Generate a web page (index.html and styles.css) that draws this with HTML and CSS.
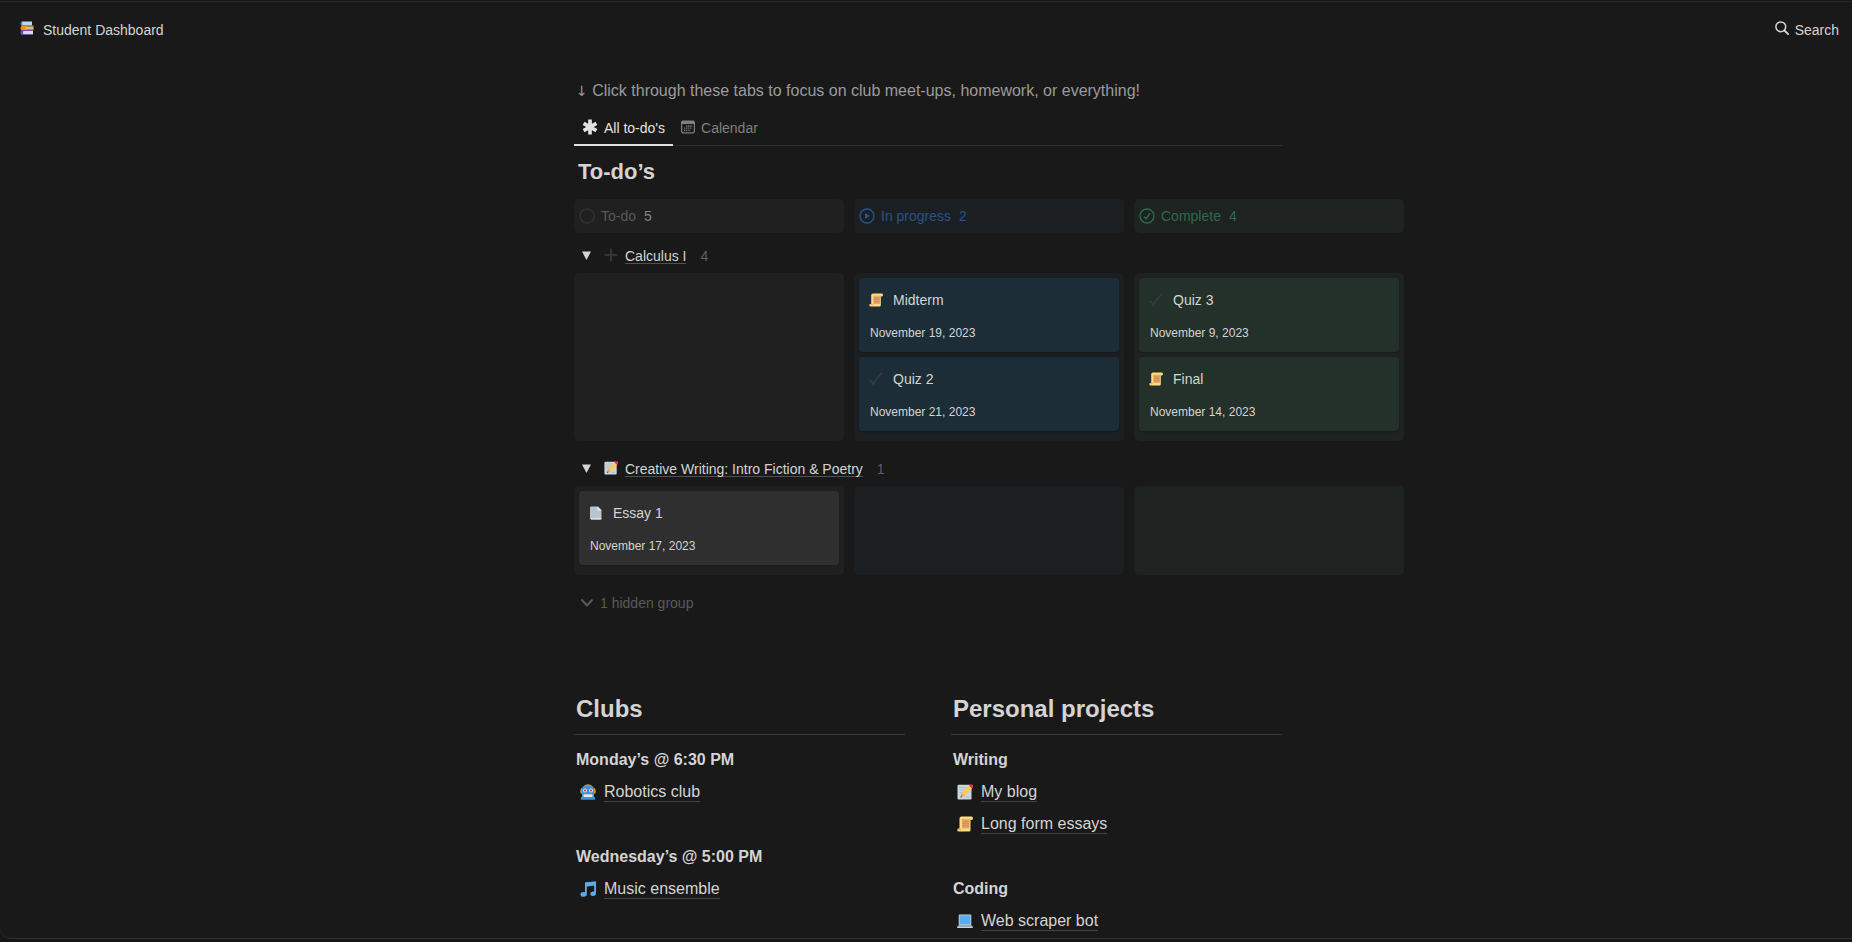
FILE: index.html
```html
<!DOCTYPE html>
<html lang="en">
<head>
<meta charset="utf-8">
<title>Student Dashboard</title>
<link rel="stylesheet" href="styles.css">
</head>
<body>
<svg class="sprites" aria-hidden="true">
  <symbol id="books" viewBox="0 0 14 14">
    <path fill="#3b88c3" d="M2 0h10v1H3v3h9v1H2Q.5 4.500.5 2.500T2 0z"/><path fill="#bfd6e4" d="M2.500 1H12v3H2.500q-1-1.500 0-3z"/>
    <path fill="#f4900c" d="M2 4.500h11.500v1H6v3h7.500v1H2Q.5 9 .5 7T2 4.500z"/><path fill="#d9b98f" d="M5.500 5.500h8v3h-8z"/>
    <path fill="#744eaa" d="M2 9h11v1H4v3h9v1H2Q.5 13.500.5 11.500T2 9z"/><path fill="#d5dbe8" d="M3.500 10H13v3H3.500q-1-1.500 0-3z"/>
  </symbol>
  <symbol id="search" viewBox="0 0 14 14"><circle cx="5.800" cy="5.800" r="4.900" fill="none" stroke="currentColor" stroke-width="1.500"/><path d="M9.500 9.500l3.600 3.600" stroke="currentColor" stroke-width="1.900" stroke-linecap="round"/></symbol>
  <symbol id="asterisk" viewBox="0 0 16 16"><path d="M8 .6v14.800M1.600 4.300l12.800 7.400M14.400 4.300L1.600 11.700" stroke="currentColor" stroke-width="3.700" stroke-linecap="butt"/></symbol>
  <symbol id="calendar" viewBox="0 0 14 14"><path fill="currentColor" fill-rule="evenodd" d="M2 .5h10a2 2 0 0 1 2 2v9a2 2 0 0 1-2 2H2a2 2 0 0 1-2-2v-9a2 2 0 0 1 2-2zM1.200 4v7.300q0 1 1 1h9.600q1 0 1-1V4z"/><path d="M5 6h6.500M3 8.200h8.500M3 10.400h6.500" stroke="currentColor" stroke-width="1.300" stroke-dasharray="1.300 .8"/></symbol>
  <symbol id="st-todo" viewBox="0 0 16 16"><circle cx="8" cy="8" r="7" fill="none" stroke="currentColor" stroke-width="1.300" stroke-dasharray="1.600 .6"/></symbol>
  <symbol id="st-play" viewBox="0 0 16 16"><circle cx="8" cy="8" r="7" fill="none" stroke="currentColor" stroke-width="1.400"/><path d="M6 5v6l5-3z" fill="currentColor"/></symbol>
  <symbol id="st-done" viewBox="0 0 16 16"><circle cx="8" cy="8" r="7" fill="none" stroke="currentColor" stroke-width="1.400"/><path d="M5 8.500l2.200 2.300L11 5" fill="none" stroke="currentColor" stroke-width="1.400"/></symbol>
  <symbol id="plus" viewBox="0 0 14 14"><path d="M7 1.500v11M1.500 7h11" stroke="#31373d" stroke-width="2.200" stroke-linecap="round"/></symbol>
  <symbol id="check" viewBox="0 0 14 14"><path d="M1.200 8.600q2 1.500 3.200 3.700Q7.500 5.500 12.600 1.200" fill="none" stroke="#343a42" stroke-width="1.900" stroke-linecap="round"/></symbol>
  <symbol id="scroll" viewBox="0 0 16 16">
    <path fill="#ffd983" d="M4.500.5h10q1.500.3 1.500 1.700T14.500 4h-1v10q0 1.500-1.500 1.500H2Q.3 15.500.3 14T1.500 12.500h1V2.500q0-2 2-2z"/>
    <path fill="#e39f3d" d="M4.500 3.200H14v.7H4.500zM1.500 12.800h3l-1 1.300h-2z"/><path fill="#e3a569" d="M5 4h7.500v8.500H5z"/><path stroke="#c37f48" stroke-width=".7" d="M5.500 5.700h6.500M5.500 7.800h6.500M5.500 10h6.500"/>
  </symbol>
  <symbol id="page" viewBox="0 0 14 14"><path fill="#b8c5cf" d="M2 .5h7L12.500 4v8.500q0 1-1 1H2.500q-1.500 0-1.500-1V1.500q0-1 1-1z"/><path fill="#e1e8ed" d="M8.500.5L12.500 4.500H8.500zM1 12.500l11.500-.5q0 1.500-1 1.500h-9z"/></symbol>
  <symbol id="memo" viewBox="0 0 16 16">
    <rect x=".5" y=".8" width="14" height="14.700" rx="1.200" fill="#ccd6dd"/><path stroke="#a9b8c2" stroke-width=".8" d="M2.500 3.500h8M2.500 6h6M2.500 8.500h4M2.500 11h2M8.500 13h4"/>
    <path fill="#ffcc4d" d="M4.800 9.100l7.200-7.400 3 2.900-7.400 7.400z"/><path fill="#d99e82" d="M3.500 13.400L4.800 9.100l2.800 2.900z"/><path fill="#292f33" d="M3.400 13.600l.6-1.600 1.100 1z"/><path fill="#ea2f49" d="M12 1.700L13.500.4Q15 .1 15.800.9t.3 2.200l-1.100 1.500z"/>
  </symbol>
  <symbol id="robot" viewBox="0 0 16 16">
    <path fill="#e0932a" d="M3 3Q4.500.3 8 .3T13 3zM.3 7q0-3 2-3.500V10Q.3 10 .3 8zM15.700 7q0-3-2-3.500V10q2 0 2-2z"/>
    <path fill="#3b94d9" d="M2 5q0-3.200 6-3.200T14 5v7.500l1.200 1.200v2H.8v-2L2 12.500z"/><circle cx="5" cy="6.500" r="2" fill="#e9dfe8"/><circle cx="11" cy="6.500" r="2" fill="#e9dfe8"/><circle cx="5" cy="6.500" r="1.100" fill="#dd2e44"/><circle cx="11" cy="6.500" r="1.100" fill="#dd2e44"/><rect x="3.400" y="10.300" width="9.200" height="2.600" rx=".6" fill="#e6e7e8"/>
  </symbol>
  <symbol id="music" viewBox="0 0 16 16"><path fill="#5dadec" d="M5 1.300Q10 1.300 15.500.2 16 .2 16 1v11q0 3-3 3-2.700 0-2.700-2.200T13 10.400l1.200.1V4.500L6.800 5.400V13q0 2.800-3.300 2.800Q.5 15.800.5 13.400T3.700 11l1.300.2z"/></symbol>
  <symbol id="laptop" viewBox="0 0 16 16"><rect x="1.700" y="1.500" width="12.600" height="10.500" rx="1" fill="#ccd6dd"/><path fill="#5dadec" d="M2.500 2.300h11v9h-11z"/><path fill="#9aaab4" d="M1.700 11.700h12.600L16 14H0z"/><path fill="#ccd6dd" d="M0 14h16q0 1-1 1H1q-1 0-1-1z"/></symbol>
  <symbol id="chevron" viewBox="0 0 14 14"><path d="M1.500 3.500l5.500 6 5.500-6" fill="none" stroke="currentColor" stroke-width="2"/></symbol>
  <symbol id="triangle" viewBox="0 0 9 9"><path d="M0 .5h9L4.500 9z" fill="currentColor"/></symbol>
</svg>
<div class="window">
  <header class="topbar">
    <a class="crumb" href="#"><svg class="i14"><use href="#books"/></svg>Student Dashboard</a>
    <button class="search" type="button"><svg class="i14"><use href="#search"/></svg>Search</button>
  </header>
  <main class="content">
    <p class="hint"><span class="arrow">↓</span> Click through these tabs to focus on club meet-ups, homework, or everything!</p>
    <nav class="tabs">
      <button class="tab active" type="button"><svg class="i16"><use href="#asterisk"/></svg>All to-do's</button>
      <button class="tab" type="button"><svg class="i14"><use href="#calendar"/></svg>Calendar</button>
    </nav>
    <h2 class="board-title">To-do’s</h2>
    <section class="board">
      <div class="row">
        <div class="col head todo"><svg class="i16"><use href="#st-todo"/></svg>To-do<span class="num">5</span></div>
        <div class="col head doing"><svg class="i16"><use href="#st-play"/></svg>In progress<span class="num">2</span></div>
        <div class="col head done"><svg class="i16"><use href="#st-done"/></svg>Complete<span class="num">4</span></div>
      </div>
      <div class="group">
        <button class="toggle" type="button" aria-label="Toggle Calculus I"><svg class="i9"><use href="#triangle"/></svg></button>
        <svg class="i14"><use href="#plus"/></svg><a href="#">Calculus I</a><span class="count">4</span>
      </div>
      <div class="row">
        <div class="col cell todo"></div>
        <div class="col cell doing">
          <article class="card"><h3><svg class="i14"><use href="#scroll"/></svg>Midterm</h3><time>November 19, 2023</time></article>
          <article class="card"><h3><svg class="i14"><use href="#check"/></svg>Quiz 2</h3><time>November 21, 2023</time></article>
        </div>
        <div class="col cell done">
          <article class="card"><h3><svg class="i14"><use href="#check"/></svg>Quiz 3</h3><time>November 9, 2023</time></article>
          <article class="card"><h3><svg class="i14"><use href="#scroll"/></svg>Final</h3><time>November 14, 2023</time></article>
        </div>
      </div>
      <div class="group later">
        <button class="toggle" type="button" aria-label="Toggle Creative Writing"><svg class="i9"><use href="#triangle"/></svg></button>
        <svg class="i14"><use href="#memo"/></svg><a href="#">Creative Writing: Intro Fiction &amp; Poetry</a><span class="count">1</span>
      </div>
      <div class="row">
        <div class="col cell todo">
          <article class="card"><h3><svg class="i14"><use href="#page"/></svg>Essay 1</h3><time>November 17, 2023</time></article>
        </div>
        <div class="col cell doing"></div>
        <div class="col cell done"></div>
      </div>
      <button class="hidden-group" type="button"><svg class="i14"><use href="#chevron"/></svg>1 hidden group</button>
    </section>
    <div class="columns">
      <section>
        <h2>Clubs</h2>
        <h3>Monday’s @ 6:30 PM</h3>
        <a class="item" href="#"><svg class="i16"><use href="#robot"/></svg><span>Robotics club</span></a>
        <div class="blank"></div>
        <h3>Wednesday’s @ 5:00 PM</h3>
        <a class="item" href="#"><svg class="i16"><use href="#music"/></svg><span>Music ensemble</span></a>
      </section>
      <section>
        <h2>Personal projects</h2>
        <h3>Writing</h3>
        <a class="item" href="#"><svg class="i16"><use href="#memo"/></svg><span>My blog</span></a>
        <a class="item" href="#"><svg class="i16"><use href="#scroll"/></svg><span>Long form essays</span></a>
        <div class="blank"></div>
        <h3>Coding</h3>
        <a class="item" href="#"><svg class="i16"><use href="#laptop"/></svg><span>Web scraper bot</span></a>
      </section>
    </div>
  </main>
</div>
</body>
</html>
```

FILE: styles.css
```css
* { box-sizing: border-box; margin: 0; }
body {
  background: #161616;
  color: #d4d4d4;
  font: 14px/20px "Liberation Sans", Arial, sans-serif;
  height: 100vh;
  padding: 1px 0 3px;
  overflow: hidden;
}
button { background: none; border: 0; padding: 0; font: inherit; color: inherit; cursor: pointer; }
a { color: inherit; text-decoration: none; }
svg { flex: none; }
.sprites { position: absolute; width: 0; height: 0; }
.i9 { width: 9px; height: 9px; }
.i14 { width: 14px; height: 14px; }
.i16 { width: 16px; height: 16px; }

.window {
  height: 100%;
  overflow: hidden;
  background: #191919;
  border-top: 1px solid #2a2a2a;
  border-bottom: 1px solid #32312e;
  border-radius: 0 0 0 10px;
}
.topbar { display: flex; justify-content: space-between; padding: 18px 13px 0 20px; height: 62px; }
.crumb, .search { display: flex; gap: 9px; height: 20px; line-height: 20px; }
.search { gap: 6px; }
.topbar svg { margin-top: 1px; }

.content { width: 708px; max-width: 100%; margin-left: calc(50% - 352px); }

.hint { padding: 15px 2px 0; font-size: 16px; line-height: 24px; color: #9b9b9b; }
.arrow { font-family: "DejaVu Sans", sans-serif; font-size: 14px; line-height: 20px; }
.tabs { display: flex; margin-top: 7px; height: 36px; border-bottom: 1px solid #2f2f2f; }
.tab { display: flex; align-items: center; gap: 6px; height: 36px; padding: 2px 8px 0; color: #7f7f7f; border-bottom: 2px solid transparent; }
.tab.active { color: #e1e1e1; border-color: #e1e1e1; }
.tab svg { margin-bottom: 3px; }
.board-title { margin: 12px 0 13px; padding-left: 4px; font-size: 22px; line-height: 28px; }

.board { width: 830px; }
.row { display: grid; grid-template-columns: repeat(3, 1fr); gap: 10px; }
.col { border-radius: 5px; }
.head { display: flex; align-items: center; gap: 6px; height: 34px; padding: 0 5px; }
.num { margin-left: 2px; }
.todo { background: #202020; }
.doing { background: #1c1f22; }
.done { background: #1e2220; }
.head.todo { color: #5a5a5a; }
.head.todo svg { color: #3a3a3a; }
.head.todo .num { color: #848484; }
.head.doing { color: #29528a; }
.head.done { color: #2d6a49; }

.group { display: flex; align-items: center; height: 40px; padding: 6px 8px 0; }
.group.later { margin-top: 5px; }
.group svg { margin-bottom: 2px; }
.toggle { display: flex; width: 22px; }
.group a { margin: 0 14px 0 7px; line-height: 14px; border-bottom: 1px solid #505050; }
.count { color: #5f5f5f; }

.cell { display: flex; flex-direction: column; gap: 5px; padding: 5px 5px 10px; }
.card { height: 74px; padding: 12px 10px; border-radius: 4px; background: #2f2f2f; box-shadow: 0 1px 2px #0003; }
.doing .card { background: #1c2d38; }
.done .card { background: #24302a; }
.card h3 { display: flex; align-items: center; gap: 10px; font-size: 14px; font-weight: 400; line-height: 20px; }
.card time { display: block; margin-top: 14px; padding-left: 1px; font-size: 12px; line-height: 18px; }

.hidden-group { display: flex; align-items: center; gap: 6px; height: 20px; margin: 18px 0 0 6px; color: #5a5a5a; }

.columns { display: grid; grid-template-columns: 1fr 1fr; gap: 46px; margin-top: 76px; }
.columns h2 { padding: 4px 2px 10px; font-size: 24px; line-height: 31px; border-bottom: 1px solid #373737; margin-bottom: 9px; }
.columns h3 { padding: 4px 2px; font-size: 16px; line-height: 24px; }
.item { display: flex; align-items: center; gap: 8px; height: 32px; padding: 0 6px; font-size: 16px; }
.item span { line-height: 18px; border-bottom: 1px solid #444; }
.blank { height: 32px; }
.item + .blank + h3 { margin-top: 1px; }
```
